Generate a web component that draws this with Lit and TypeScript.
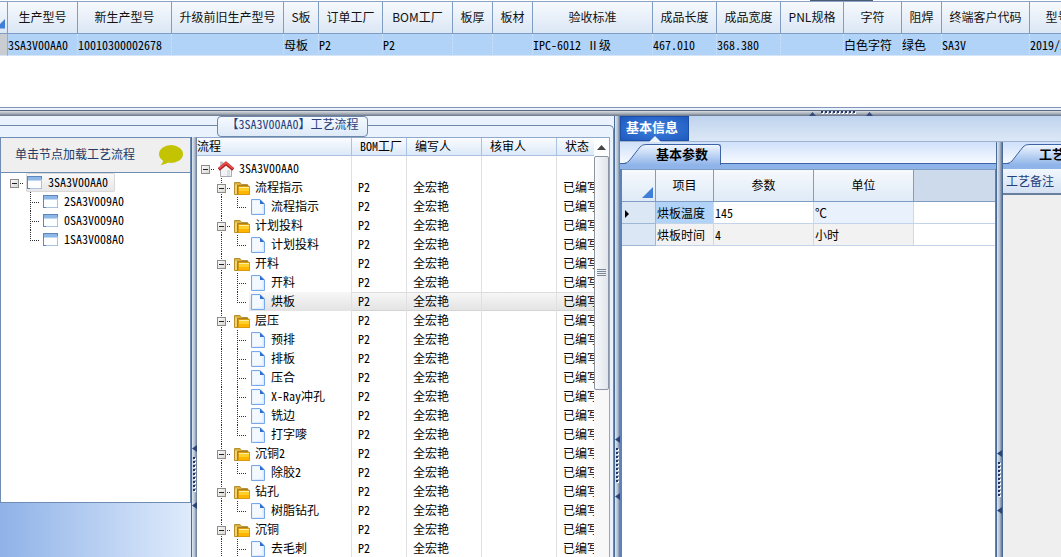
import { LitElement, html, svg, css } from "lit";
import { customElement, property } from "lit/decorators.js";
import { classMap } from "lit/directives/class-map.js";
import { styleMap } from "lit/directives/style-map.js";

type IconName = "window" | "home" | "folder" | "doc";

interface TreeNode {
  label: string;
  depth: number;
  icon: IconName;
  branch?: boolean;
  last?: boolean;
  selected?: boolean;
}

interface Column {
  title: string;
  width?: number;
  value?: string;
}

const ORDER_COLUMNS: Column[] = [
  { title: "生产型号", width: 70, value: "3SA3V00AA0" },
  { title: "新生产型号", width: 94, value: "10010300002678" },
  { title: "升级前旧生产型号", width: 112 },
  { title: "S板", width: 35, value: "母板" },
  { title: "订单工厂", width: 64, value: "P2" },
  { title: "BOM工厂", width: 70, value: "P2" },
  { title: "板厚", width: 40 },
  { title: "板材", width: 40 },
  { title: "验收标准", width: 120, value: "IPC-6012 Ⅱ级" },
  { title: "成品长度", width: 64, value: "467.010" },
  { title: "成品宽度", width: 64, value: "368.380" },
  { title: "PNL规格", width: 63 },
  { title: "字符", width: 58, value: "白色字符" },
  { title: "阻焊", width: 40, value: "绿色" },
  { title: "终端客户代码", width: 88, value: "SA3V" },
  { title: "型号日期", width: 80, value: "2019/10/12" },
];

const MODELS: TreeNode[] = [
  { label: "3SA3V00AA0", depth: 0, icon: "window", branch: true, selected: true },
  { label: "2SA3V009A0", depth: 1, icon: "window" },
  { label: "0SA3V009A0", depth: 1, icon: "window" },
  { label: "1SA3V008A0", depth: 1, icon: "window", last: true },
];

const stage = (label: string): TreeNode => ({ label, depth: 1, icon: "folder", branch: true });
const step = (label: string, last = false, selected = false): TreeNode => ({
  label, depth: 2, icon: "doc", last, selected,
});

const FLOW: TreeNode[] = [
  { label: "3SA3V00AA0", depth: 0, icon: "home", branch: true },
  stage("流程指示"),
  step("流程指示", true),
  stage("计划投料"),
  step("计划投料", true),
  stage("开料"),
  step("开料"),
  step("烘板", true, true),
  stage("层压"),
  step("预排"),
  step("排板"),
  step("压合"),
  step("X-Ray冲孔"),
  step("铣边"),
  step("打字嘜", true),
  stage("沉铜2"),
  step("除胶2", true),
  stage("钻孔"),
  step("树脂钻孔", true),
  stage("沉铜"),
  step("去毛刺"),
];

const ICONS = {
  window: svg`
    <rect x="0.5" y="1.5" width="14" height="12" fill="#fdfeff" stroke="#5f86bb"/>
    <rect x="1" y="2" width="13" height="3" fill="#8db7e6"/>
    <path d="M1 5.5H14" stroke="#c3d9f2"/>
    <path d="M14.5 4V13.5H3" fill="none" stroke="#a9c3e0"/>`,
  home: svg`
    <path d="M2.5 8L8 3L13.5 8V15.5H2.5Z" fill="#f3f3f6" stroke="#a9a9b4"/>
    <path d="M9 9H12V15H9Z" fill="#dcdce4"/>
    <rect x="2.5" y="1" width="2.500" height="5" fill="#c5c5cd" stroke="#a9a9b4" stroke-width="0.500"/>
    <path d="M0.800 8.400L8 2.400L15.200 8.400" fill="none" stroke="#a5201f" stroke-width="3.200"/>
    <path d="M1 7.600L8 1.800L15 7.600" fill="none" stroke="#ec4a46" stroke-width="2"/>`,
  folder: svg`
    <path d="M0.5 2.5H6L7.500 4.500H13.5V14.500H0.5Z" fill="#dcae3c" stroke="#b8902f"/>
    <path d="M2 14V4.500" stroke="#f6df8e" stroke-width="1.500"/>
    <path d="M3.5 14.500V5.500H14.500" fill="none" stroke="#a87f22"/>
    <rect x="4.5" y="6.5" width="11" height="8" fill="#ffd02a" stroke="#d99a0c"/>
    <path d="M5 7.5H15" stroke="#fff0a0"/>
    <path d="M5 12.5H15" stroke="#ffb400" stroke-width="3"/>`,
  doc: svg`
    <path d="M1.500 0.5H10L14.500 5V15.5H1.500Z" fill="#dcebff" stroke="#78a8ec"/>
    <path d="M2.500 1.500H9L12.500 6V13.500L2.500 14.500Z" fill="#f3f9ff"/>
    <path d="M10 0.5L14.500 5H10Z" fill="#2f6fd0"/>`,
};

const icon = (name: IconName) => html`
  <svg class="icon" width="16" height="16" aria-hidden="true">${ICONS[name]}</svg>`;

/* Dotted connector lines and the collapse box in front of a tree label. */
const guide = (n: TreeNode) => {
  const x = 8 + 16 * n.depth;
  const width = 20 + 16 * n.depth;
  const dots = (x1: number, y1: number, x2: number, y2: number) => svg`
    <line x1=${x1} y1=${y1} x2=${x2} y2=${y2} stroke="#303030" stroke-dasharray="1 1"/>`;
  return html`
    <span class="guide">
      <svg width=${width} height="19" aria-hidden="true">
        ${n.depth > 0 ? dots(x + 0.5, 0, x + 0.5, n.last ? 11 : 19) : ""}
        ${n.depth > 1 ? dots(24.5, 0, 24.5, 19) : ""}
        ${dots(x, 10.5, width - 2, 10.5)}
      </svg>
      ${n.branch
        ? html`<button class="toggle" aria-label="折叠 ${n.label}">
            <svg width="9" height="9"><path d="M2 4.5H7" stroke="#222"/></svg>
          </button>`
        : ""}
    </span>`;
};

const treeCss = css`
  .node { display: flex; align-items: center; height: 19px; white-space: nowrap; }
  .guide { display: grid; flex: none; }
  .guide > * { grid-area: 1 / 1; }
  .toggle {
    justify-self: end; align-self: center; margin: 1px 7px 0 0; padding: 0;
    width: 9px; height: 9px; border: 0; outline: 1px solid #8c8c8c; outline-offset: -1px;
    background: linear-gradient(135deg, #fff, #d6d3cd);
  }
  .icon { flex: none; margin: 0 5px 0 1px; }
  .text { padding-bottom: 2px; }
  svg { display: block; }
`;

/* Bar between two panes, with a dotted grip and two collapse arrows. */
@customElement("split-bar")
export class SplitBar extends LitElement {
  @property({ type: Boolean, reflect: true }) horizontal = false;
  @property({ type: Number }) offset = 0;

  static styles = css`
    :host { display: block; flex: none; overflow: hidden; width: 6px; box-sizing: border-box;
      border-left: 1px solid #4a6a98;
      background: linear-gradient(90deg, #dfe9f5, #b3c1d3 50%, #66778f); }
    :host([horizontal]) { width: auto; height: 6px; border-left: 0; border-top: 1px solid #5d6a80;
      background: linear-gradient(#d9dde2, #a9b0b9 50%, #66728a); }
    svg { display: block; }
  `;

  render() {
    const dots = Array.from({ length: 9 }, (_, i) => i * 4 + 12);
    if (this.horizontal) {
      return html`<svg width="64" height="5" aria-hidden="true"
        style=${styleMap({ marginLeft: `${this.offset}px` })}>
        <path d="M0 5L3.5 1L7 5ZM57 5L60.5 1L64 5Z" fill="#34497c"/>
        ${dots.map((d) => svg`<rect x=${d + 1} y="1" width="2" height="2" fill="#fff"/>
          <rect x=${d} y="0" width="2" height="2" fill="#24396f"/>`)}
      </svg>`;
    }
    return html`<svg width="5" height="64" aria-hidden="true"
      style=${styleMap({ marginTop: `${this.offset}px` })}>
      <path d="M5 0L0 3.5L5 7ZM5 57L0 60.5L5 64Z" fill="#2b4378"/>
      ${dots.map((d) => svg`<rect x="2" y=${d + 1} width="2" height="2" fill="#fff"/>
        <rect x="1" y=${d} width="2" height="2" fill="#1f3468"/>`)}
    </svg>`;
  }
}

@customElement("order-grid")
export class OrderGrid extends LitElement {
  static styles = css`
    :host { display: block; position: relative; overflow: hidden; background: #fff;
      border-bottom: 1px solid #8296b8; height: 106px; padding-top: 1px; }
    .mark { position: absolute; top: 0; left: 810px; width: 63px; height: 1px; background: #4b5a73; }
    table { border-collapse: separate; border-spacing: 0; table-layout: fixed; width: 1110px;
      border-top: 1px solid #8ba3c4; }
    th, td { padding: 0; box-sizing: border-box; overflow: hidden; white-space: nowrap; }
    th { height: 32px; padding-bottom: 2px; font: 12px/18px "Noto Sans CJK SC", sans-serif; color: #111;
      background: linear-gradient(#f6f9fd, #dbe7f5);
      border-right: 1px solid #7f9cc2; border-bottom: 1px solid #7f9cc2; }
    td { height: 22px; background: #b0d3f7; line-height: 18px;
      border-right: 1px dotted #d0e5fa; border-bottom: 1px solid #d6e6f8; }
    .stub { width: 8px; }
    td.stub { background: #c9cdd2; border-right: 1px solid #9aabc2; }
    svg { display: block; margin-top: 14px; }
  `;

  render() {
    return html`
      <div class="mark"></div>
      <table>
        <colgroup>
          <col class="stub" />
          ${ORDER_COLUMNS.map((c) => html`<col style=${styleMap({ width: `${c.width}px` })} />`)}
        </colgroup>
        <thead>
          <tr>
            <th class="stub"><svg width="6" height="11"><path d="M0 10.5V6L5 1V10.5Z" fill="#3f7fd8"/></svg></th>
            ${ORDER_COLUMNS.map((c) => html`<th>${c.title}</th>`)}
          </tr>
        </thead>
        <tbody>
          <tr>
            <td class="stub"></td>
            ${ORDER_COLUMNS.map((c) => html`<td>${c.value ?? ""}</td>`)}
          </tr>
        </tbody>
      </table>`;
  }
}

@customElement("model-pane")
export class ModelPane extends LitElement {
  static styles = [treeCss, css`
    :host { display: flex; flex-direction: column; box-sizing: border-box;
      background: linear-gradient(90deg, #8fb2e8, #dfebfc); }
    .box { box-sizing: border-box; height: 366px; background: #fff; border: 1px solid #6f8db4; }
    header { display: flex; align-items: center; justify-content: space-between; box-sizing: border-box;
      height: 35px; padding: 0 6px 0 14px; background: #efefef; color: #223a66;
      border-bottom: 1px solid #6f8db4; }
    .chat { padding: 0; border: 0; background: none; }
    ul { list-style: none; margin: 0; padding: 0 5px; }
    .label { display: flex; align-items: center; height: 19px; box-sizing: border-box; padding-right: 7px; }
    .picked { border-radius: 2px; background: linear-gradient(#fafafa, #e6e6e6); box-shadow: 0 0 0 1px #d9d9d9 inset; }
  `];

  render() {
    return html`
      <section class="box">
        <header>
          <span class="text">单击节点加载工艺流程</span>
          <button class="chat" aria-label="消息">
            <svg width="26" height="22">
              <ellipse cx="13" cy="10" rx="12" ry="9" fill="#c3c300"/>
              <path d="M5 14Q6 18 2.500 21Q9 20 12 17Z" fill="#c3c300"/>
            </svg>
          </button>
        </header>
        <ul role="tree">
          ${MODELS.map((n) => html`
            <li class="node" role="treeitem">
              ${guide(n)}
              <span class=${classMap({ label: true, picked: !!n.selected })}>
                ${icon(n.icon)}<span class="text">${n.label}</span>
              </span>
            </li>`)}
        </ul>
      </section>`;
  }
}

@customElement("flow-pane")
export class FlowPane extends LitElement {
  static styles = [treeCss, css`
    :host { display: flex; box-sizing: border-box; overflow: hidden; background: #fff;
      border-top: 1px solid #8fa9ca; border-right: 1px solid #8fa9ca; }
    .view { flex: 1; min-width: 0; overflow: hidden; }
    table { border-collapse: separate; border-spacing: 0; table-layout: fixed; width: 420px; min-height: 100%; }
    th, td { box-sizing: border-box; padding: 0 0 2px 6px; text-align: left; white-space: nowrap;
      font-weight: normal; overflow: hidden; border-right: 1px solid #e0e0e0; }
    th { height: 18px; padding-left: 8px; line-height: 15px; background: linear-gradient(#fafcff, #dce9f8);
      border-right-color: #a9c2e2; border-bottom: 1px solid #a9c2e2; }
    th:first-child, td:first-child { padding-left: 0; }
    td:first-child { padding-bottom: 0; }
    .gap td { height: 3px; }
    tr.picked td { background: linear-gradient(#f7f7f7, #e3e3e3); box-shadow: 0 -1px #d4d4d4 inset, 0 1px #dcdcdc inset; }
    tr.picked td:first-child { background: linear-gradient(#f7f7f7, #e3e3e3) 52px 0 no-repeat;
      box-shadow: none; }
    .c1 { width: 155px; } .c2 { width: 55px; } .c3, .c4, .c5 { width: 75px; }
    td { height: 19px; }
    .gap td { padding: 0; }
    .bar { flex: none; width: 15px; display: flex; flex-direction: column; background: #f8f8f8; }
    .up { height: 18px; padding: 0; border: 0; background: #fcfdff; display: grid; place-items: center; }
    .thumb { box-sizing: border-box; height: 234px; border: 1px solid #8b95a3; border-radius: 2px;
      background: linear-gradient(90deg, #f8fafc, #e1e5eb); display: grid; place-items: center; }
  `];

  render() {
    return html`
      <div class="view">
        <table>
          <colgroup>
            <col class="c1" /><col class="c2" /><col class="c3" /><col class="c4" /><col class="c5" />
          </colgroup>
          <thead>
            <tr>${["流程", "BOM工厂", "编写人", "核审人", "状态"].map((t) => html`<th>${t}</th>`)}</tr>
          </thead>
          <tbody>
            <tr class="gap"><td></td><td></td><td></td><td></td><td></td></tr>
            ${FLOW.map((n) => html`
              <tr class=${classMap({ picked: !!n.selected })}>
                <td><div class="node">${guide(n)}${icon(n.icon)}<span class="text">${n.label}</span></div></td>
                <td>${n.depth ? "P2" : ""}</td>
                <td>${n.depth ? "全宏艳" : ""}</td>
                <td></td>
                <td>${n.depth ? "已编写" : ""}</td>
              </tr>`)}
          </tbody>
        </table>
      </div>
      <div class="bar">
        <button class="up" aria-label="向上滚动">
          <svg width="9" height="5"><path d="M0 5L4.500 0L9 5Z" fill="#444"/></svg>
        </button>
        <div class="thumb">
          <svg width="9" height="8"><path d="M0 0.500H9M0 2.500H9M0 4.500H9M0 6.500H9" stroke="#7d8794"/></svg>
        </div>
      </div>`;
  }
}

/* Slanted tab sitting on a blue rule. */
@customElement("slant-tab")
export class SlantTab extends LitElement {
  @property() label = "";
  @property({ type: Number }) inset = 36;

  static styles = css`
    :host { display: block; flex: none; overflow: hidden; height: 27px; box-sizing: border-box;
      background: linear-gradient(#cfe0fa, #f6faff 21px, #3c64a4 21px, #3c64a4 22px, #8fb4e9 22px); }
    button { display: flex; padding: 0; border: 0; background: none; height: 23px; margin-top: 2px;
      font: inherit; font-size: 13px; font-weight: bold; color: #000; }
    svg { display: block; flex: none; }
    .text { box-sizing: border-box; height: 21px; padding-right: 12px; line-height: 18px; white-space: nowrap;
      border-top: 1px solid #3c64a4; border-right: 1px solid #3c64a4; border-radius: 0 3px 0 0;
      background: linear-gradient(#f0f6ff, #8fb4e9); }
  `;

  render() {
    const w = this.inset;
    return html`
      <button>
        <svg width=${w} height="21" aria-hidden="true">
          <defs>
            <linearGradient id="face" x2="0" y2="1">
              <stop stop-color="#f0f6ff"/><stop offset="1" stop-color="#8fb4e9"/>
            </linearGradient>
          </defs>
          <path d="M4 20.500Q7 20 9 17L20 3Q22 0.500 26 0.500H${w}V21H4Z" fill="url(#face)"/>
          <path d="M0 19.500H4Q7 19 9 17L20 3Q22 0.500 26 0.500H${w}" fill="none" stroke="#3c64a4"/>
        </svg>
        <span class="text">${this.label}</span>
      </button>`;
  }
}

@customElement("detail-pane")
export class DetailPane extends LitElement {
  static styles = css`
    :host { display: flex; flex-direction: column; min-width: 0; overflow: hidden; }
    nav { flex: none; display: flex; height: 25px; background: linear-gradient(#bfd3ee, #dce8f6);
      border-bottom: 1px solid #9db3ce; }
    .main { position: relative; padding: 0 11px 4px 6px; border: 0; outline: 1px solid #1d4fa8; outline-offset: -1px;
      background: radial-gradient(#3f82df, #1c57bd); color: #fff; font: inherit; font-size: 13px; font-weight: bold;
      line-height: 20px; }
    .main svg { position: absolute; left: 29px; bottom: -1px; }
    .body { flex: 1; min-height: 0; display: flex; }
    .params { flex: 0 0 376px; background: #fff; box-sizing: border-box; overflow: hidden; }
    .sheet { box-sizing: border-box; height: 100%; border-left: 2px solid #5c82b8; border-right: 1px solid #5c82b8; }
    table { border-collapse: separate; border-spacing: 0; table-layout: fixed; width: 100%;
      border-top: 1px solid #7f9cc2; }
    th, td { box-sizing: border-box; padding: 0 1px; text-align: left; white-space: nowrap; }
    th { height: 32px; padding-bottom: 2px; text-align: center; font: 12px/18px "Noto Sans CJK SC", sans-serif;
      background: linear-gradient(#f6f9fd, #dfeaf7);
      border-right: 1px solid #7f9cc2; border-bottom: 1px solid #7f9cc2; }
    th.rest { background: #cddaec; border-right: 0; }
    th svg { display: block; margin: 16px 0 0 19px; }
    td { height: 22px; line-height: 18px; border-right: 1px solid #c9daf0; border-bottom: 1px solid #c3d4ea; }
    td.stub { background: #dbe7f4; border-color: #9fb6d4; padding-left: 3px; }
    td.rest { border-right: 0; }
    .name { background: #b0d3f7; } .unit { background: #e9f2fc; }
    .alt { background: #f2f2f2; }
    .k0 { width: 34px; } .k1 { width: 58px; } .k2, .k3 { width: 100px; }
    .notes { flex: 1; min-width: 0; display: flex; flex-direction: column; overflow: hidden; background: #efefef;
      border-left: 1px solid #4a6a98; }
    .caption { flex: none; box-sizing: border-box; height: 26px; padding-left: 3px; line-height: 23px;
      white-space: nowrap; color: #25407a; background: linear-gradient(#f2f7fd, #d3e1f2);
      border-bottom: 2px solid #6a7f9e; }
  `;

  render() {
    return html`
      <nav>
        <button class="main">基本信息
          <svg width="12" height="6" aria-hidden="true"><path d="M0 6L6 0L12 6Z" fill="#eef5ff"/></svg>
        </button>
      </nav>
      <div class="body">
        <section class="params">
          <slant-tab label="基本参数"></slant-tab>
          <div class="sheet">
            <table>
              <colgroup>
                <col class="k0" /><col class="k1" /><col class="k2" /><col class="k3" /><col />
              </colgroup>
              <thead>
                <tr>
                  <th><svg width="11" height="11"><path d="M0 11L11 0V11Z" fill="#3f7fd8"/></svg></th>
                  <th>项目</th><th>参数</th><th>单位</th><th class="rest"></th>
                </tr>
              </thead>
              <tbody>
                <tr>
                  <td class="stub"><svg width="4" height="8"><path d="M0 0L4 4L0 8Z"/></svg></td>
                  <td class="name">烘板温度</td><td>145</td><td class="unit">℃</td><td class="rest"></td>
                </tr>
                <tr>
                  <td class="stub"></td>
                  <td class="alt">烘板时间</td><td class="alt">4</td><td class="alt">小时</td><td class="rest"></td>
                </tr>
              </tbody>
            </table>
          </div>
        </section>
        <split-bar .offset=${308}></split-bar>
        <section class="notes">
          <slant-tab label="工艺备注"></slant-tab>
          <div class="caption">工艺备注</div>
        </section>
      </div>`;
  }
}

@customElement("app-root")
export class AppRoot extends LitElement {
  static styles = css`
    :host { display: flex; flex-direction: column; height: 100vh; overflow: hidden; color: #000;
      background: #eaf3fd; font: 12px/16px "Noto Sans Mono CJK SC", "Noto Sans CJK SC", sans-serif; }
    order-grid { flex: none; margin-bottom: 2px; }
    .work { flex: 1; min-height: 0; display: flex; }
    .flow { flex: 0 0 614px; min-width: 0; display: flex; flex-direction: column; margin: 0; }
    .title { flex: none; display: flex; height: 21px; }
    .title::before, .title::after { content: ""; box-sizing: border-box; margin-top: 9px;
      border-top: 1px solid #6f87a8; }
    .title::before { width: 217px; }
    .title::after { flex: 1; border-right: 1px solid #6f87a8; border-radius: 0 5px 0 0; }
    h2 { box-sizing: border-box; margin: 0; width: 151px; height: 21px; text-align: center; white-space: nowrap;
      font: inherit; line-height: 13px; color: #25407a; border: 1px solid #6f87a8; border-radius: 4px;
      background: linear-gradient(#f4f9ff, #dfeaf8); }
    .panes { flex: 1; min-height: 0; display: flex; padding-right: 3px; border-right: 1px solid #6f87a8; }
    model-pane { flex: 0 0 191px; }
    flow-pane { flex: 1; min-width: 0; }
    detail-pane { flex: 1; }
  `;

  render() {
    return html`
      <order-grid></order-grid>
      <split-bar horizontal .offset=${809}></split-bar>
      <main class="work">
        <section class="flow">
          <div class="title"><h2>【3SA3V00AA0】工艺流程</h2></div>
          <div class="panes">
            <model-pane></model-pane>
            <split-bar .offset=${308}></split-bar>
            <flow-pane></flow-pane>
          </div>
        </section>
        <split-bar .offset=${320}></split-bar>
        <detail-pane></detail-pane>
      </main>`;
  }
}
